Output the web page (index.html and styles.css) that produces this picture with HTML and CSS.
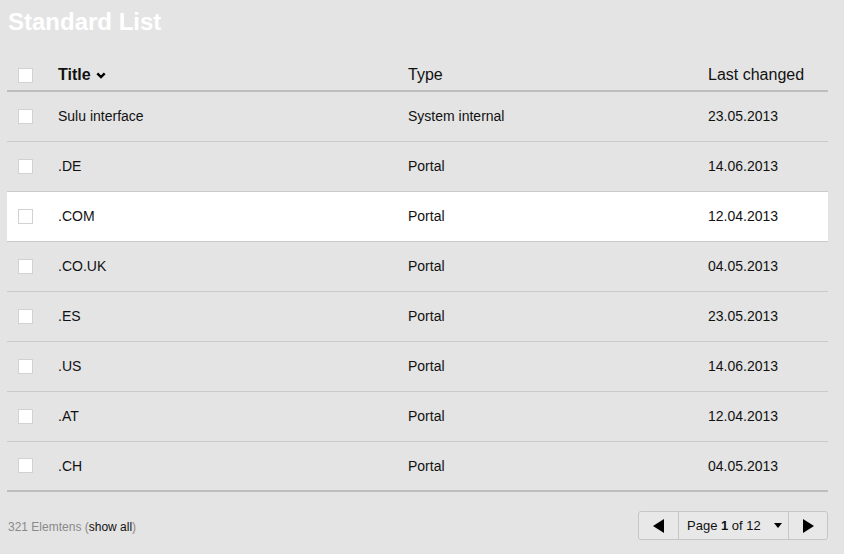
FILE: index.html
```html
<!DOCTYPE html>
<html lang="en">
<head>
<meta charset="utf-8">
<title>Standard List</title>
<link rel="stylesheet" href="styles.css">
</head>
<body>
<div class="page">
  <h1 class="page-title">Standard List</h1>
  <div class="list">
    <div class="row head">
      <span class="cb"></span>
      <span class="cell sort">Title
        <svg class="chev" width="10" height="7" viewBox="0 0 10 7"><polyline points="1.3,1.3 5,5 8.7,1.3" fill="none" stroke="#000" stroke-width="2.4"/></svg>
      </span>
      <span class="cell">Type</span>
      <span class="cell">Last changed</span>
    </div>
    <div class="row"><span class="cb"></span><span class="cell">Sulu interface</span><span class="cell">System internal</span><span class="cell">23.05.2013</span></div>
    <div class="row"><span class="cb"></span><span class="cell">.DE</span><span class="cell">Portal</span><span class="cell">14.06.2013</span></div>
    <div class="row active"><span class="cb"></span><span class="cell">.COM</span><span class="cell">Portal</span><span class="cell">12.04.2013</span></div>
    <div class="row"><span class="cb"></span><span class="cell">.CO.UK</span><span class="cell">Portal</span><span class="cell">04.05.2013</span></div>
    <div class="row"><span class="cb"></span><span class="cell">.ES</span><span class="cell">Portal</span><span class="cell">23.05.2013</span></div>
    <div class="row"><span class="cb"></span><span class="cell">.US</span><span class="cell">Portal</span><span class="cell">14.06.2013</span></div>
    <div class="row"><span class="cb"></span><span class="cell">.AT</span><span class="cell">Portal</span><span class="cell">12.04.2013</span></div>
    <div class="row last"><span class="cb"></span><span class="cell">.CH</span><span class="cell">Portal</span><span class="cell">04.05.2013</span></div>
  </div>
  <div class="footer">
    <div class="count">321 Elemtens (<a class="show-all" href="#">show all</a>)</div>
    <div class="pager">
      <span class="pg-btn prev"><svg width="11" height="14" viewBox="0 0 11 14"><polygon points="11,0 11,14 0,7" fill="#000"/></svg></span>
      <span class="pg-mid"><span class="pg-label">Page <b>1</b> of 12</span>
        <svg class="pg-caret" width="8" height="5" viewBox="0 0 8 5"><polygon points="0,0 8,0 4,5" fill="#000"/></svg>
      </span>
      <span class="pg-btn next"><svg width="11" height="14" viewBox="0 0 11 14"><polygon points="0,0 0,14 11,7" fill="#000"/></svg></span>
    </div>
  </div>
</div>
</body>
</html>
```
FILE: styles.css
```css
* { box-sizing: border-box; }
html, body { margin: 0; padding: 0; }
body {
  background: #e4e4e4;
  font-family: "Liberation Sans", Arial, Helvetica, sans-serif;
  color: #111;
  width: 844px;
  height: 554px;
  overflow: hidden;
}
.page {
  padding: 8px 16px 0 7px;
}
.page-title {
  margin: 0 0 0 1px;
  font-size: 24px;
  line-height: 28px;
  font-weight: bold;
  color: #fff;
}
.list {
  margin-top: 22px;
  width: 821px;
}
.row {
  display: grid;
  grid-template-columns: 40px 350px 300px 1fr;
  align-items: center;
  padding-left: 11px;
  padding-bottom: 1px;
  height: 50px;
  border-bottom: 1px solid #cacaca;
  font-size: 14px;
}
.row.head {
  height: 34px;
  border-bottom: 2px solid #bdbdbd;
  font-size: 16px;
  padding-top: 2px;
  padding-bottom: 0;
}
.row.active { background: #fff; }
.row.last { border-bottom: 2px solid #bdbdbd; }
.cb {
  display: block;
  width: 15px;
  height: 15px;
  background: #fff;
  border: 1px solid #d2d2d2;
}
.cell { white-space: nowrap; }
.sort { font-weight: bold; display: flex; align-items: center; gap: 5px; }
.chev { margin-top: 1px; }
.footer {
  display: flex;
  justify-content: space-between;
  align-items: center;
  margin-top: 19px;
  width: 821px;
  padding-left: 1px;
}
.count {
  font-size: 12px;
  color: #8a8a8a;
  padding-top: 3px;
}
.show-all { color: #111; text-decoration: none; }
.pager {
  display: flex;
  height: 29px;
  width: 190px;
  border: 1px solid #c6c6c6;
  border-radius: 3px;
  background: #e8e8e8;
}
.pg-btn {
  display: flex;
  align-items: center;
  justify-content: center;
}
.prev { width: 40px; border-right: 1px solid #c6c6c6; }
.next { flex: 1; border-left: 1px solid #c6c6c6; padding-left: 1px; }
.pg-mid {
  width: 109px;
  display: flex;
  align-items: center;
  padding-left: 8px;
  font-size: 13px;
  color: #111;
}
.pg-label { white-space: nowrap; }
.pg-mid b { font-weight: bold; }
.pg-caret { margin-left: 13px; }
```
